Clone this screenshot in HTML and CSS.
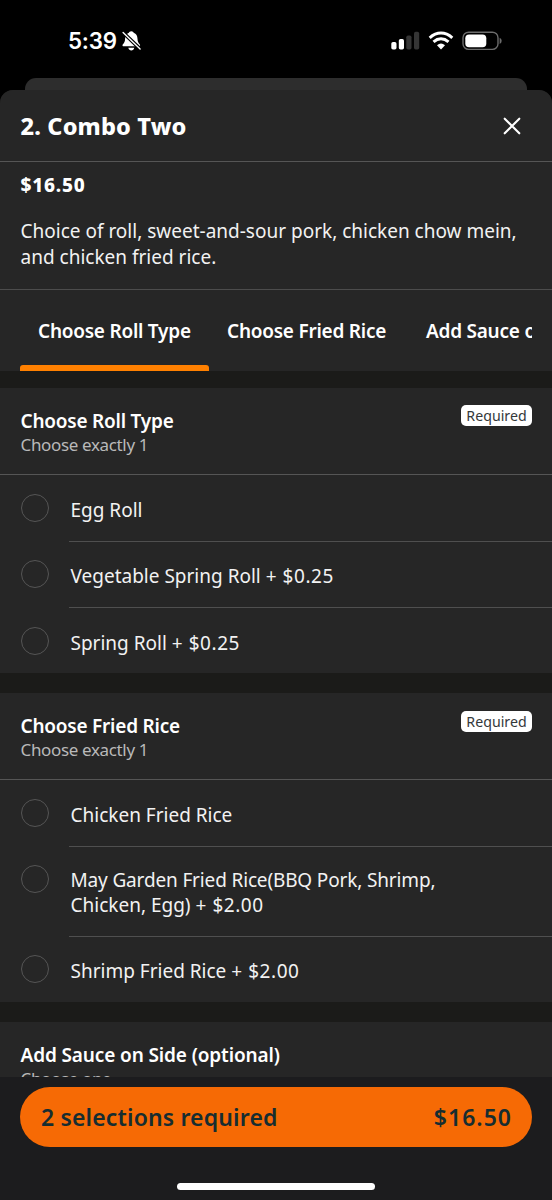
FILE: index.html
```html
<!DOCTYPE html>
<html lang="en">
<head>
<meta charset="utf-8">
<title>Combo Two</title>
<link rel="stylesheet" href="styles.css">
</head>
<body>
<div class="phone">
  <div class="status">
    <div class="clock"><span class="time">5:39</span>
      <svg class="bell" width="20" height="21" viewBox="0 0 20 21"><path fill="#fff" d="M9.3 .2C7.9 .2 7.2 1 6.9 1.8C4.2 2.6 3.2 5 3.1 7.8C3 10.8 2.3 11.9 .9 13.2C.1 14.2.5 15.3 1.8 15.3H16.8C18.1 15.3 18.5 14.2 17.7 13.2C16.3 11.9 15.6 10.8 15.5 7.8C15.4 5 14.4 2.6 11.7 1.8C11.4 1 10.7 .2 9.3 .2ZM6.3 16.8H12.3C11.8 18.7 10.8 19.5 9.3 19.5S6.8 18.7 6.3 16.8Z"/><path d="M1.1 1.5L18.1 17.9" stroke="#000" stroke-width="3.6"/><path d="M1.1 1.5L18.1 17.9" stroke="#fff" stroke-width="1.4" stroke-linecap="round"/></svg>
    </div>
    <div class="indicators">
      <svg width="29" height="20" viewBox="0 0 29 20"><g fill="#fff"><rect x="0.3" y="11" width="5.2" height="7.5" rx="1.7"/><rect x="7.8" y="8" width="5.2" height="10.5" rx="1.7"/></g><g fill="#353535"><rect x="15.3" y="4.5" width="5.2" height="14" rx="1.7"/><rect x="23" y="0.7" width="5.2" height="17.8" rx="1.7"/></g></svg>
      <svg width="26" height="20" viewBox="0 0 26 20"><g fill="none" stroke="#fff" stroke-width="3"><path d="M1.7 6.8Q7 2.1 13 2.1T24.3 6.8"/><path d="M5.5 10.8Q9 7.8 13 7.8T20.5 10.8"/></g><path fill="#fff" d="M9 14.3Q13 10.8 17 14.3L13 18.5Z"/></svg>
      <svg width="40" height="20" viewBox="0 0 40 20"><rect x="1" y="1.2" width="35" height="17.2" rx="5.6" fill="none" stroke="#6c6c6c" stroke-width="1.4"/><rect x="3.3" y="3.4" width="21" height="12.8" rx="3.8" fill="#fff"/><path fill="#6c6c6c" d="M37.6 6.7Q39.7 7.5 39.7 9.8T37.6 12.9Z"/></svg>
    </div>
  </div>
  <div class="sheet-behind"></div>
  <main class="sheet">
    <header class="header">
      <h1 class="title">2. Combo Two</h1>
      <svg width="18" height="18" viewBox="0 0 18 18"><path d="M1.7 1.7L16.3 16.3M16.3 1.7L1.7 16.3" stroke="#fff" stroke-width="2.1" stroke-linecap="round"/></svg>
    </header>
    <section class="intro">
      <div class="price">$16.50</div>
      <p class="description">Choice of roll, sweet-and-sour pork, chicken chow mein,<br>and chicken fried rice.</p>
    </section>
    <nav class="tabs">
      <div class="tab active">Choose Roll Type</div>
      <div class="tab second">Choose Fried Rice</div>
      <div class="tab third">Add Sauce on Side</div>
    </nav>
    <section class="group roll">
      <div class="group-head"><div><h2>Choose Roll Type</h2><p class="hint">Choose exactly 1</p></div><span class="badge">Required</span></div>
      <div class="option"><i class="radio"></i><div class="label">Egg Roll</div></div>
      <div class="option"><i class="radio"></i><div class="label">Vegetable Spring Roll <span class="extra">+ $0.25</span></div></div>
      <div class="option"><i class="radio"></i><div class="label">Spring Roll <span class="extra">+ $0.25</span></div></div>
    </section>
    <section class="group rice">
      <div class="group-head"><div><h2>Choose Fried Rice</h2><p class="hint">Choose exactly 1</p></div><span class="badge">Required</span></div>
      <div class="option"><i class="radio"></i><div class="label">Chicken Fried Rice</div></div>
      <div class="option tall"><i class="radio"></i><div class="label"><span class="tight">May Garden Fried Rice(BBQ Pork, Shrimp,</span><br>Chicken, Egg) <span class="extra">+ $2.00</span></div></div>
      <div class="option last"><i class="radio"></i><div class="label">Shrimp Fried Rice <span class="extra">+ $2.00</span></div></div>
    </section>
    <section class="group sauce">
      <div class="group-head"><div><h2>Add Sauce on Side (optional)</h2><p class="hint">Choose one</p></div></div>
    </section>
  </main>
  <footer class="footer">
    <div class="cta"><span class="cta-text">2 selections required</span><span class="cta-price">$16.50</span></div>
    <div class="home"></div>
  </footer>
</div>
</body>
</html>
```
FILE: styles.css
```css
* { box-sizing: border-box; }
body { margin: 0; background: #000; font-family: "Noto Sans", sans-serif; color: #fff; }
h1, h2, p { margin: 0; }
svg { display: block; flex: none; }
.phone { width: 552px; height: 1200px; overflow: hidden; display: flex; flex-direction: column; white-space: nowrap; }
.status { flex: none; height: 78px; display: flex; justify-content: space-between; padding: 31px 50px 0 68px; }
.clock { display: flex; gap: 4px; }
.time { width: 50px; font: 600 22.3px/20px Inter, sans-serif; letter-spacing: -0.2px; }
.indicators { display: flex; gap: 8px; }
.sheet-behind { flex: none; height: 12px; margin: 0 25px; background: #2d2d2d; border-radius: 11px 11px 0 0; }
.sheet { flex: none; height: 987px; overflow: hidden; background: #1b1b19; border-radius: 13px 13px 0 0; }
.header { height: 72px; display: flex; align-items: center; justify-content: space-between; padding: 0 31px 0 20.5px; background: #262626; border-bottom: 1px solid #555; }
.title { font-size: 23.5px; font-weight: 800; line-height: 30px; letter-spacing: 0.15px; }
.intro { height: 128px; padding: 10px 20px 0 20.5px; background: #262626; border-bottom: 1px solid #4c4c4c; }
.price { font-size: 19px; font-weight: 800; line-height: 26px; letter-spacing: 0.8px; }
.description { margin-top: 19.5px; font-size: 19px; line-height: 26px; color: #f2f2f2; }
.tabs { height: 81px; display: flex; overflow: hidden; padding-left: 20px; border-right: 20px solid #262626; background: #262626; font-size: 19px; font-weight: 600; line-height: 26px; letter-spacing: -0.24px; }
.tab { flex: none; padding: 28px 0 0 18px; }
.active { width: 189px; display: flex; flex-direction: column; justify-content: space-between; }
.active::after { content: ""; height: 6px; margin-left: -18px; background: #ff8000; border-radius: 3px 3px 0 0; }
.second { width: 199px; }
.group { background: #262626; }
.roll { height: 285px; margin-top: 17px; }
.rice { height: 309px; margin-top: 20px; }
.sauce { margin-top: 20px; height: 60px; }
.group-head { height: 87px; display: flex; align-items: flex-start; justify-content: space-between; padding: 20px 20px 0 20.5px; border-bottom: 1px solid #555; }
h2 { font-size: 19px; font-weight: 600; line-height: 26px; letter-spacing: -0.22px; }
.sauce h2 { letter-spacing: -0.12px; }
.hint { font-size: 17px; line-height: 22px; color: #b9b9b9; letter-spacing: -0.35px; }
.badge { margin-top: -3px; width: 71px; height: 21px; border-radius: 5px; background: #fff; color: #34383a; font-size: 14.2px; line-height: 21px; text-align: center; }
.rice .badge { margin-top: -2.5px; }
.option { height: 66.5px; display: flex; }
.radio { flex: none; width: 28px; height: 28px; margin: 18.5px 20px 0 21px; border: 1.5px solid #555; border-radius: 50%; }
.label { flex: 1; padding: 21.5px 0 0 1.5px; border-bottom: 1px solid #4f4f4f; font-size: 19px; line-height: 26px; color: #f2f2f2; }
.extra { letter-spacing: 0.55px; }
.tight { letter-spacing: -0.15px; }
.option:last-child .label { border-bottom: 0; }
.tall { height: 90px; }
.tall .label { padding-top: 21px; line-height: 25.5px; }
.footer { flex: none; height: 123px; padding: 10px 20px 0; background: #1c1c1e; }
.cta { height: 60px; display: flex; align-items: center; justify-content: space-between; padding: 0 20px 0 21px; border-radius: 30px; background: #f66a05; color: #162d30; font-size: 23px; font-weight: 600; }
.cta-text { letter-spacing: 0.15px; }
.cta-price { letter-spacing: 1px; }
.home { width: 198px; height: 7px; margin: 36px auto 0; border-radius: 4px; background: #fff; }
```
